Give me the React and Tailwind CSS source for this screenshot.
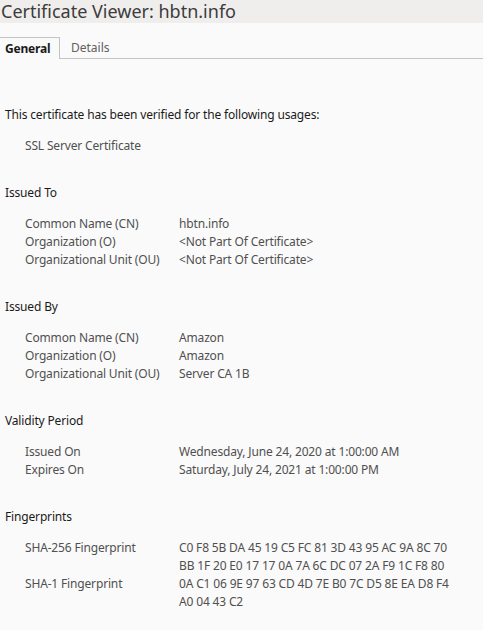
export default function App() {
  const sections = [
    {
      title: "Issued To",
      rows: [
        ["Common Name (CN)", "hbtn.info"],
        ["Organization (O)", "<Not Part Of Certificate>"],
        ["Organizational Unit (OU)", "<Not Part Of Certificate>"],
      ],
    },
    {
      title: "Issued By",
      rows: [
        ["Common Name (CN)", "Amazon"],
        ["Organization (O)", "Amazon"],
        ["Organizational Unit (OU)", "Server CA 1B"],
      ],
    },
    {
      title: "Validity Period",
      rows: [
        ["Issued On", "Wednesday, June 24, 2020 at 1:00:00 AM"],
        ["Expires On", "Saturday, July 24, 2021 at 1:00:00 PM"],
      ],
    },
    {
      title: "Fingerprints",
      rows: [
        [
          "SHA-256 Fingerprint",
          "C0 F8 5B DA 45 19 C5 FC 81 3D 43 95 AC 9A 8C 70\nBB 1F 20 E0 17 17 0A 7A 6C DC 07 2A F9 1C F8 80",
        ],
        [
          "SHA-1 Fingerprint",
          "0A C1 06 9E 97 63 CD 4D 7E B0 7C D5 8E EA D8 F4\nA0 04 43 C2",
        ],
      ],
    },
  ];

  return (
    <div className="w-[483px] h-[630px] overflow-hidden bg-[#fafafa] font-['Noto_Sans',sans-serif]">
      {/* Title bar */}
      <div className="h-[23px] bg-[#efeeec] pl-[1px] text-[18px] leading-[23px] text-[#3c3c3c] whitespace-nowrap">
        Certificate Viewer: hbtn.info
      </div>

      {/* Tabs */}
      <div className="flex pt-[14px]">
        <div className="h-[22px] w-[60px] border-t border-r border-[#c4c4c4] pl-[5px] text-[12px] font-bold leading-[21px] tracking-[-0.2px] text-[#1a1a1a]">
          General
        </div>
        <div className="flex-1 border-b border-[#c4c4c4] pl-[11px] text-[12px] leading-[21px] text-[#606060]">
          Details
        </div>
      </div>

      {/* Content */}
      <div className="px-[5px] pt-[47px] text-[12px] leading-[18px] tracking-[-0.16px]">
        <div className="text-[#1a1a1a]">
          This certificate has been verified for the following usages:
        </div>
        <div className="mt-[13px] pl-[20px] text-[#505050]">SSL Server Certificate</div>

        {sections.map((s) => (
          <div key={s.title} className="mt-[29px]">
            <div className="text-[#1a1a1a]">{s.title}</div>
            <div className="mt-[13px] pl-[20px] text-[#505050]">
              {s.rows.map(([label, value]) => (
                <div key={label} className="flex">
                  <div className="w-[154px] shrink-0">{label}</div>
                  <div className="whitespace-pre">{value}</div>
                </div>
              ))}
            </div>
          </div>
        ))}
      </div>
    </div>
  );
}
